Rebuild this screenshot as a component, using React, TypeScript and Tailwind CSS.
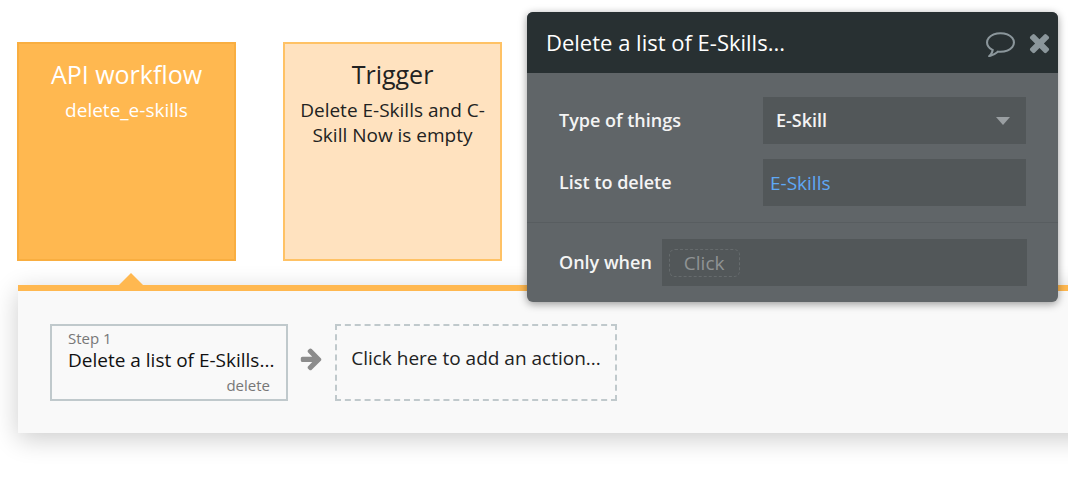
import { useState } from "react";
import type { ReactNode } from "react";

type IconProps = { className?: string; path: string };

function Icon({ className, path }: IconProps) {
  return (
    <svg viewBox="0 0 1792 1792" fill="currentColor" aria-hidden="true" className={className}>
      <path d={path} />
    </svg>
  );
}

const COMMENT =
  "M896 384q-204 0-381.5 69.5t-282 187.5-104.5 255q0 112 71.5 213.5t201.5 175.5l87 50-27 96q-24 91-70 172 152-63 275-171l43-38 57 6q69 8 130 8 204 0 381.5-69.5t282-187.5 104.5-255-104.5-255-282-187.5-381.5-69.5zm896 512q0 174-120 321.5t-326 233-450 85.5q-70 0-145-8-198 175-460 242-49 14-114 22h-5q-15 0-27-10.5t-16-27.5v-1q-3-4-.5-12t2-10 4.5-9.5l6-9 7-8.5 8-9q7-8 31-34.5t34.5-38 31-39.5 32.5-51 27-59 26-76q-157-89-247.5-220t-90.5-281q0-174 120-321.5t326-233 450-85.5 450 85.5 326 233 120 321.5z";
const TIMES =
  "M1490 1322q0 40-28 68l-136 136q-28 28-68 28t-68-28l-294-294-294 294q-28 28-68 28t-68-28l-136-136q-28-28-28-68t28-68l294-294-294-294q-28-28-28-68t28-68l136-136q28-28 68-28t68 28l294 294 294-294q28-28 68-28t68 28l136 136q28 28 28 68t-28 68l-294 294 294 294q28 28 28 68z";
const ARROW_RIGHT =
  "M1600 960q0 54-37 91l-651 651q-39 37-91 37-51 0-90-37l-75-75q-38-38-38-91t38-91l293-293h-704q-52 0-84.5-37.5t-32.5-90.5v-128q0-53 32.5-90.5t84.5-37.5h704l-293-294q-38-36-38-90t38-90l75-75q38-38 90-38 53 0 91 38l651 651q37 35 37 90z";

function EventCard({ title, active, children }: { title: string; active?: boolean; children: ReactNode }) {
  return (
    <button
      type="button"
      className={
        active
          ? "flex size-[219px] flex-col items-center border-2 border-[#f9ae40] bg-[#ffb850] px-3 pt-[14px] text-white"
          : "flex size-[219px] flex-col items-center border-2 border-[#ffc265] bg-[#ffe2bf] px-3 pt-[14px] text-[#222]"
      }
    >
      <span className="text-[25px] leading-8">{title}</span>
      <span className="mt-2 text-[19px] leading-[25px]">{children}</span>
    </button>
  );
}

function PropertyEditor() {
  const [thing, setThing] = useState("E-Skill");
  const [list, setList] = useState("E-Skills");

  return (
    <section className="absolute top-3 right-[10px] w-[531px] overflow-hidden rounded-md bg-[#606568] text-[18px] font-semibold text-[#f4f4f4] shadow-[0_2px_8px_rgba(0,0,0,0.4)]">
      <header className="flex h-[61px] items-center bg-[#283032] pr-1 pl-[19px]">
        <h2 className="flex-1 text-[22px] font-normal text-white">Delete a list of E-Skills...</h2>
        <div className="flex gap-[10px] text-[#8b969b]">
          <button type="button" aria-label="Comment">
            <Icon path={COMMENT} className="size-[29px]" />
          </button>
          <button type="button" aria-label="Close">
            <Icon path={TIMES} className="size-[29px]" />
          </button>
        </div>
      </header>

      <div className="flex flex-col gap-[15px] border-b border-[#585d60] pt-6 pr-8 pb-4 pl-8">
        <div className="flex items-center">
          <label htmlFor="thing" className="flex-1">Type of things</label>
          <div className="grid w-[263px] items-center">
            <select
              id="thing"
              value={thing}
              onChange={(e) => setThing(e.target.value)}
              className="col-start-1 row-start-1 h-[47px] w-full appearance-none bg-[#525759] px-[13px]"
            >
              <option>E-Skill</option>
              <option>C-Skill</option>
            </select>
            {/* Caret */}
            <svg viewBox="0 0 14 8" className="pointer-events-none col-start-1 row-start-1 mr-4 h-2 w-[14px] justify-self-end fill-[#9a9fa2]">
              <path d="M0 0h14L7 8z" />
            </svg>
          </div>
        </div>
        <div className="flex items-center">
          <label htmlFor="list" className="flex-1">List to delete</label>
          <input
            id="list"
            value={list}
            onChange={(e) => setList(e.target.value)}
            className="h-[47px] w-[263px] bg-[#525759] px-[7px] text-[19px] font-normal text-[#5fa8f5]"
          />
        </div>
      </div>

      <div className="flex items-center gap-[10px] pt-4 pr-[31px] pb-4 pl-8">
        <label htmlFor="only-when">Only when</label>
        <div className="flex h-[47px] flex-1 items-center bg-[#525759] px-[7px]">
          <button
            id="only-when"
            type="button"
            className="rounded-md border border-dashed border-[#666b6d] px-[14px] text-[19px] leading-[26px] font-normal text-[#8f9394]"
          >
            Click
          </button>
        </div>
      </div>
    </section>
  );
}

export default function App() {
  return (
    <main className="relative min-h-screen overflow-hidden bg-white pt-[42px] pb-[60px] font-['Open_Sans','Noto_Sans',sans-serif]">
      <div className="flex gap-[47px] pl-[17px]">
        <EventCard title="API workflow" active>
          delete_e-skills
        </EventCard>
        <EventCard title="Trigger">Delete E-Skills and C-Skill Now is empty</EventCard>
      </div>

      {/* Pointer from the open event down to its steps */}
      <svg viewBox="0 0 24 12" className="mt-3 ml-[119px] h-3 w-6 fill-[#ffb850]">
        <path d="M12 0l12 12H0z" />
      </svg>

      <section className="-mr-10 ml-[18px] flex items-start border-t-[6px] border-[#ffb850] bg-[#f9f9f9] pt-[33px] pb-8 pl-8 shadow-[0_6px_24px_rgba(0,0,0,0.2)]">
        <button
          type="button"
          className="flex h-[77px] w-[238px] flex-col border-2 border-[#c0c9cc] px-4 pt-[2px] text-left text-[#777]"
        >
          <span className="text-[15px] leading-5">Step 1</span>
          <span className="text-[19px] leading-[25px] whitespace-nowrap text-[#111]">Delete a list of E-Skills...</span>
          <span className="self-end text-[15px] leading-6">delete</span>
        </button>
        <div className="mx-[11px] flex h-[68px] items-center text-[#8c8c8c]">
          <Icon path={ARROW_RIGHT} className="size-[25px]" />
        </div>
        <button
          type="button"
          className="h-[77px] w-[282px] border-2 border-dashed border-[#c0c9cc] pb-2 text-[19px] text-[#222]"
        >
          Click here to add an action...
        </button>
      </section>

      <PropertyEditor />
    </main>
  );
}
